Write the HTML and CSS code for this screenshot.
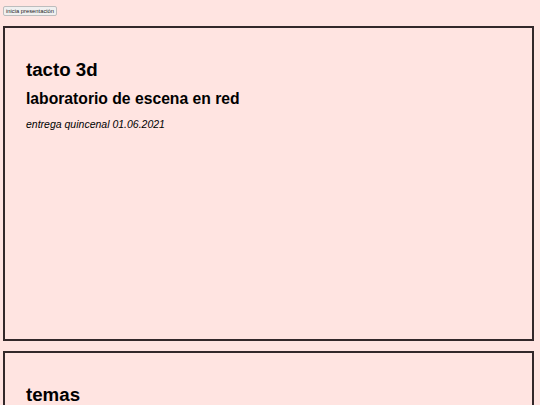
FILE: index.html
```html
<!DOCTYPE html>
<html lang="es">
<head>
<meta charset="utf-8">
<title>tacto 3d</title>
<link rel="stylesheet" href="styles.css">
</head>
<body>
<div class="toolbar"><button class="start-btn">inicia presentación</button></div>
<section class="slide">
  <h1 class="title">tacto 3d</h1>
  <h2 class="subtitle">laboratorio de escena en red</h2>
  <p class="note">entrega quincenal 01.06.2021</p>
</section>
<section class="slide">
  <h1 class="title">temas</h1>
</section>
</body>
</html>
```
FILE: styles.css
```css
html, body {
  margin: 0;
  padding: 0;
  background: #ffe4e1;
  font-family: "Liberation Sans", Arial, sans-serif;
  color: #000;
}
body {
  padding: 6px 6px 0 3px;
  overflow: hidden;
}
.toolbar {
  display: flex;
  height: 10px;
}
.start-btn {
  font-family: "Liberation Sans", Arial, sans-serif;
  font-size: 5.8px;
  line-height: 8px;
  height: 10px;
  padding: 0 2px;
  margin: 0;
  width: 54px;
  border: 1px solid #bdbdbd;
  border-radius: 2px;
  background: #f0f0f0;
  color: #222;
  white-space: nowrap;
}
.slide {
  box-sizing: border-box;
  height: 315px;
  margin-top: 10px;
  border: 2px solid #33282a;
  padding: 30px 21px 0;
}
.title {
  margin: 0;
  font-size: 18.7px;
  line-height: 24px;
  font-weight: bold;
}
.subtitle {
  margin: 7px 0 0;
  font-size: 15.7px;
  line-height: 20px;
  font-weight: bold;
}
.note {
  margin: 7.5px 0 0;
  font-size: 10.5px;
  line-height: 14px;
  font-style: italic;
}
```
